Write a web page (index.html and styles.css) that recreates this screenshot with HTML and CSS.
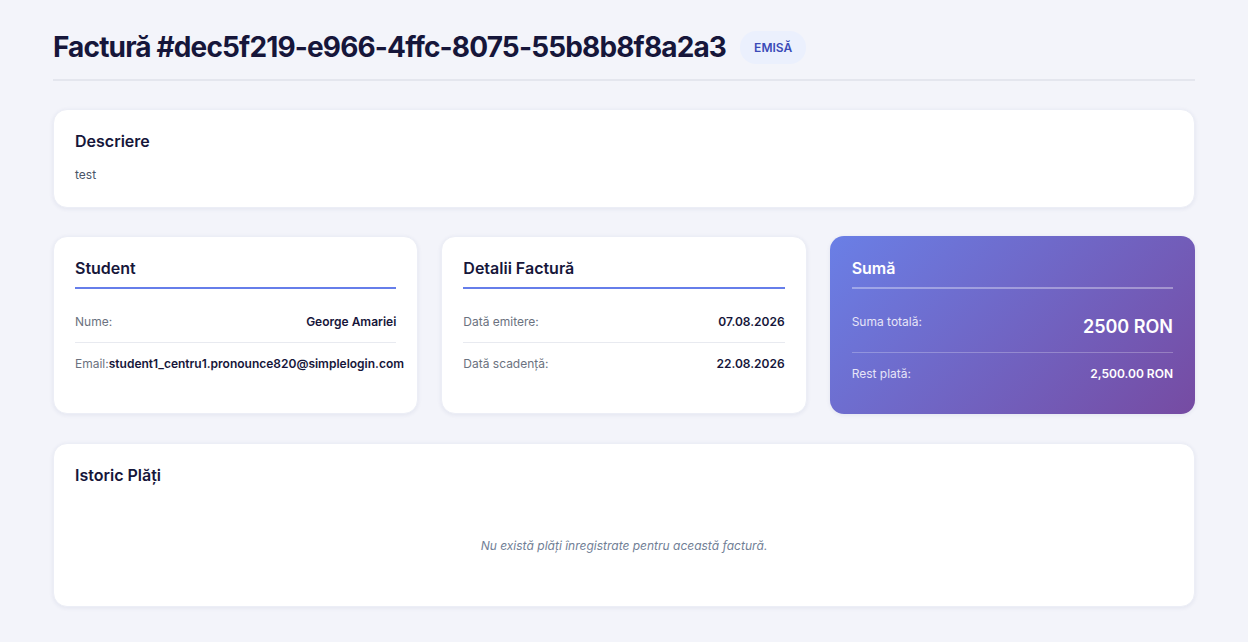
FILE: index.html
```html
<!DOCTYPE html>
<html lang="ro">
<head>
<meta charset="utf-8">
<title>Factură #dec5f219-e966-4ffc-8075-55b8b8f8a2a3</title>
<link rel="stylesheet" href="styles.css">
</head>
<body>
<div class="page">

  <div class="page-header">
    <h1>Factură #dec5f219-e966-4ffc-8075-55b8b8f8a2a3</h1>
    <span class="badge">EMISĂ</span>
  </div>

  <div class="card">
    <h3>Descriere</h3>
    <p class="desc">test</p>
  </div>

  <div class="cards-row">
    <div class="card info-card">
      <h3 class="card-title">Student</h3>
      <div class="info-row">
        <span class="label">Nume:</span>
        <span class="value">George Amariei</span>
      </div>
      <div class="info-row">
        <span class="label">Email:</span><span class="value">student1_centru1.pronounce820@simplelogin.com</span>
      </div>
    </div>

    <div class="card info-card">
      <h3 class="card-title">Detalii Factură</h3>
      <div class="info-row">
        <span class="label">Dată emitere:</span>
        <span class="value">07.08.2026</span>
      </div>
      <div class="info-row">
        <span class="label">Dată scadență:</span>
        <span class="value">22.08.2026</span>
      </div>
    </div>

    <div class="card info-card amount-card">
      <h3 class="card-title">Sumă</h3>
      <div class="info-row">
        <span class="label">Suma totală:</span>
        <span class="value total">2500 RON</span>
      </div>
      <div class="info-row">
        <span class="label">Rest plată:</span>
        <span class="value">2,500.00 RON</span>
      </div>
    </div>
  </div>

  <div class="card payments">
    <h3>Istoric Plăți</h3>
    <p class="empty">Nu există plăți înregistrate pentru această factură.</p>
  </div>

</div>
</body>
</html>
```

FILE: styles.css
```css
body {
    margin: 0;
    background: #f3f4fa;
    font-family: Inter, "Noto Sans", sans-serif;
    color: #1a1a3e;
}

.page {
    width: 1142px;
    margin: 0 auto;
    padding: 30px 0 30px;
}

.page-header {
    display: flex;
    align-items: center;
    gap: 14px;
    padding-bottom: 15px;
    border-bottom: 2px solid #e4e6ee;
    margin-bottom: 28px;
}

.page-header h1 {
    margin: 0;
    font-size: 28px;
    font-weight: 700;
    letter-spacing: -0.85px;
    color: #16163a;
}

.badge {
    background: #ebf0fd;
    color: #3b4bb8;
    font-size: 12px;
    font-weight: 600;
    padding: 9px 14px;
    border-radius: 16px;
}

.card {
    background: #fff;
    border-radius: 14px;
    box-shadow: 0 1px 4px rgba(40, 50, 120, 0.08);
    border: 1px solid #eceef6;
    padding: 21px;
    margin-bottom: 28px;
}

.card h3 {
    margin: 0;
    font-size: 16px;
    font-weight: 600;
    color: #16163a;
}

.desc {
    margin: 16px 0 4px;
    font-size: 12px;
    color: #4a5568;
}

.cards-row {
    display: grid;
    grid-template-columns: repeat(3, minmax(0, 1fr));
    gap: 23px;
    margin-bottom: 29px;
}

.cards-row .card {
    margin-bottom: 0;
}

.info-card {
    padding-top: 21px;
    padding-bottom: 29px;
}

.card-title {
    padding-bottom: 9px;
    border-bottom: 2px solid #667eea;
    margin-bottom: 12px !important;
}

.info-row {
    display: flex;
    justify-content: space-between;
    align-items: center;
    font-size: 12px;
    padding: 13px 0;
    border-bottom: 1px solid #e8eaf0;
}

.info-row:last-child {
    border-bottom: none;
}

.label {
    color: #6b7280;
    flex: none;
}

.value {
    font-weight: 600;
    color: #16163a;
    white-space: nowrap;
}

/* gradient summary card */
.amount-card {
    background: linear-gradient(135deg, #6a7fe6 0%, #764ba2 100%);
    background-origin: border-box;
    border-color: transparent;
    color: #fff;
    padding-bottom: 19px;
}

.amount-card .card-title {
    color: #fff;
    border-bottom-color: rgba(255, 255, 255, 0.35);
}

.amount-card .label {
    color: #e6e4f7;
    align-self: flex-start;
}

.amount-card .value {
    color: #fff;
}

.amount-card .info-row {
    border-bottom-color: rgba(255, 255, 255, 0.25);
}

.amount-card .total {
    font-size: 18px;
    line-height: 25px;
}

.payments {
    padding-bottom: 53px;
}

.empty {
    margin: 53px 0 0;
    text-align: center;
    font-size: 12px;
    font-style: italic;
    color: #718096;
}
```
